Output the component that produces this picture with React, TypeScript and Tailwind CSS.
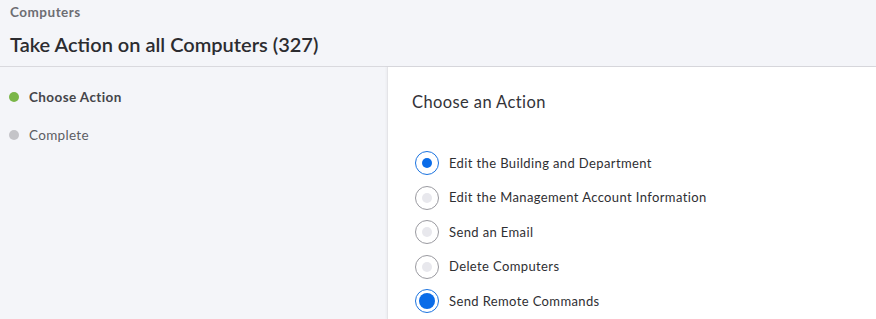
import React from "react";

const actions = [
  { label: "Edit the Building and Department", state: "checked" },
  { label: "Edit the Management Account Information", state: "off" },
  { label: "Send an Email", state: "off" },
  { label: "Delete Computers", state: "off" },
  { label: "Send Remote Commands", state: "active" },
];

const Radio = ({ state }: { state: string }) => {
  if (state === "off") {
    return (
      <span className="flex h-[24px] w-[24px] items-center justify-center rounded-full border border-[#9a9aa0] bg-white">
        <span className="h-[10px] w-[10px] rounded-full bg-[#e8e8ed]" />
      </span>
    );
  }
  return (
    <span className="flex h-[24px] w-[24px] items-center justify-center rounded-full border border-[#1a73e0] bg-white">
      <span
        className={
          state === "active"
            ? "h-[16px] w-[16px] rounded-full bg-[#0a6ce8]"
            : "h-[10px] w-[10px] rounded-full bg-[#0a6ce8]"
        }
      />
    </span>
  );
};

export default function App() {
  return (
    <div className="flex h-[319px] w-[876px] flex-col overflow-hidden bg-[#f4f5f9] font-['Lato',sans-serif] text-[#333338]">
      <div className="h-[67px] border-b border-[#d9d9de] px-[10px] pt-[3px]">
        <div className="text-[13.5px] font-bold leading-[18px] tracking-[0.5px] text-[#6d6d73]">Computers</div>
        <div className="mt-[10px] text-[20px] font-semibold leading-[26px] text-[#2c2c30]">
          Take Action on all Computers (327)
        </div>
      </div>
      <div className="flex flex-1">
        <div className="w-[387px] pt-[20px] pl-[9px]">
          <div className="flex h-[20px] items-center gap-[10px]">
            <span className="h-[10px] w-[10px] rounded-full bg-[#7ab648]" />
            <span className="text-[13.5px] font-bold tracking-[0.4px] text-[#45454a]">Choose Action</span>
          </div>
          <div className="mt-[18px] flex h-[20px] items-center gap-[10px]">
            <span className="h-[10px] w-[10px] rounded-full bg-[#c4c4c8]" />
            <span className="text-[13.5px] tracking-[0.3px] text-[#5d5d63]">Complete</span>
          </div>
        </div>
        <div className="flex-1 border-l border-[#e4e4e8] bg-white pl-[24px] pt-[24px] shadow-[-1px_0_2px_rgba(0,0,0,0.04)]">
          <div className="text-[16.5px] leading-[22px] tracking-[0.4px] text-[#333338]">Choose an Action</div>
          <div className="mt-[38px] ml-[3px] flex flex-col gap-[10px]">
            {actions.map((a) => (
              <div key={a.label} className="flex h-[24.5px] items-center gap-[10px]">
                <Radio state={a.state} />
                <span className="text-[13px] tracking-[0.38px] text-[#2f2f33]">{a.label}</span>
              </div>
            ))}
          </div>
        </div>
      </div>
    </div>
  );
}
